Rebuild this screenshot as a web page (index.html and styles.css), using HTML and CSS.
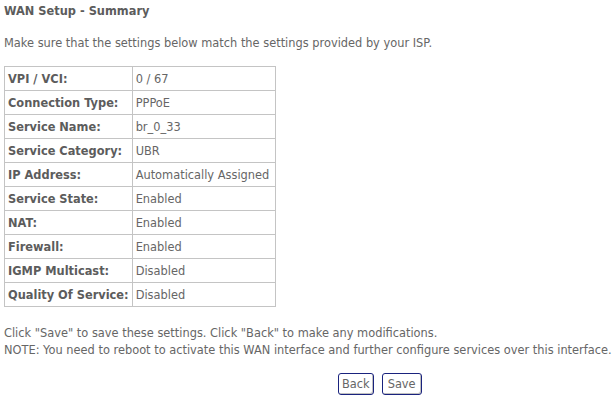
FILE: index.html
```html
<!DOCTYPE html>
<html lang="en">
<head>
    <meta charset="UTF-8">
    <title>WAN Setup - Summary</title>
    <link rel="stylesheet" href="styles.css">
</head>
<body>
    <div class="page">
        <div class="title">WAN Setup - Summary</div>
        <p class="intro">Make sure that the settings below match the settings provided by your ISP.</p>
        <table class="summary">
            <tr><td class="label">VPI / VCI:</td><td>0 / 67</td></tr>
            <tr><td class="label">Connection Type:</td><td>PPPoE</td></tr>
            <tr><td class="label">Service Name:</td><td>br_0_33</td></tr>
            <tr><td class="label">Service Category:</td><td>UBR</td></tr>
            <tr><td class="label">IP Address:</td><td>Automatically Assigned</td></tr>
            <tr><td class="label">Service State:</td><td>Enabled</td></tr>
            <tr><td class="label">NAT:</td><td>Enabled</td></tr>
            <tr><td class="label">Firewall:</td><td>Enabled</td></tr>
            <tr><td class="label">IGMP Multicast:</td><td>Disabled</td></tr>
            <tr><td class="label">Quality Of Service:</td><td>Disabled</td></tr>
        </table>
        <p class="note">Click "Save" to save these settings. Click "Back" to make any modifications.<br>
        NOTE: You need to reboot to activate this WAN interface and further configure services over this interface.</p>
        <div class="buttons">
            <button class="btn">Back</button>
            <button class="btn save">Save</button>
        </div>
    </div>
</body>
</html>
```

FILE: styles.css
```css
* {
    margin: 0;
    padding: 0;
    box-sizing: border-box;
}

body {
    font-family: 'DejaVu Sans', Tahoma, sans-serif;
    font-size: 11.4px;
    color: #666;
    background-color: #fff;
}

.page {
    padding: 4px 4px 0 4px;
}

.title {
    font-weight: bold;
    line-height: 14px;
    color: #5c5c5c;
}

.intro {
    margin-top: 18px;
    line-height: 14px;
}

.summary {
    border-collapse: collapse;
    margin-top: 16px;
}

.summary td {
    border: 1px solid #c4c4c4;
    height: 24px;
    padding: 0 3px;
    white-space: nowrap;
    vertical-align: middle;
}

.summary td.label {
    width: 127px;
    font-weight: bold;
    color: #5c5c5c;
}

.summary td + td {
    width: 143px;
}

.note {
    margin-top: 18px;
    line-height: 17px;
}

.buttons {
    display: flex;
    gap: 8px;
    padding-left: 334px;
    margin-top: 14px;
}

.btn {
    font-family: inherit;
    font-size: 11.4px;
    color: #666;
    background-color: #fff;
    border: 1px solid #1a237e;
    border-radius: 3px;
    height: 22px;
    padding: 0 3px;
    box-shadow: inset -1px -1px 0 #c0c0c0;
}

.btn.save {
    padding: 0 5px;
}
```
